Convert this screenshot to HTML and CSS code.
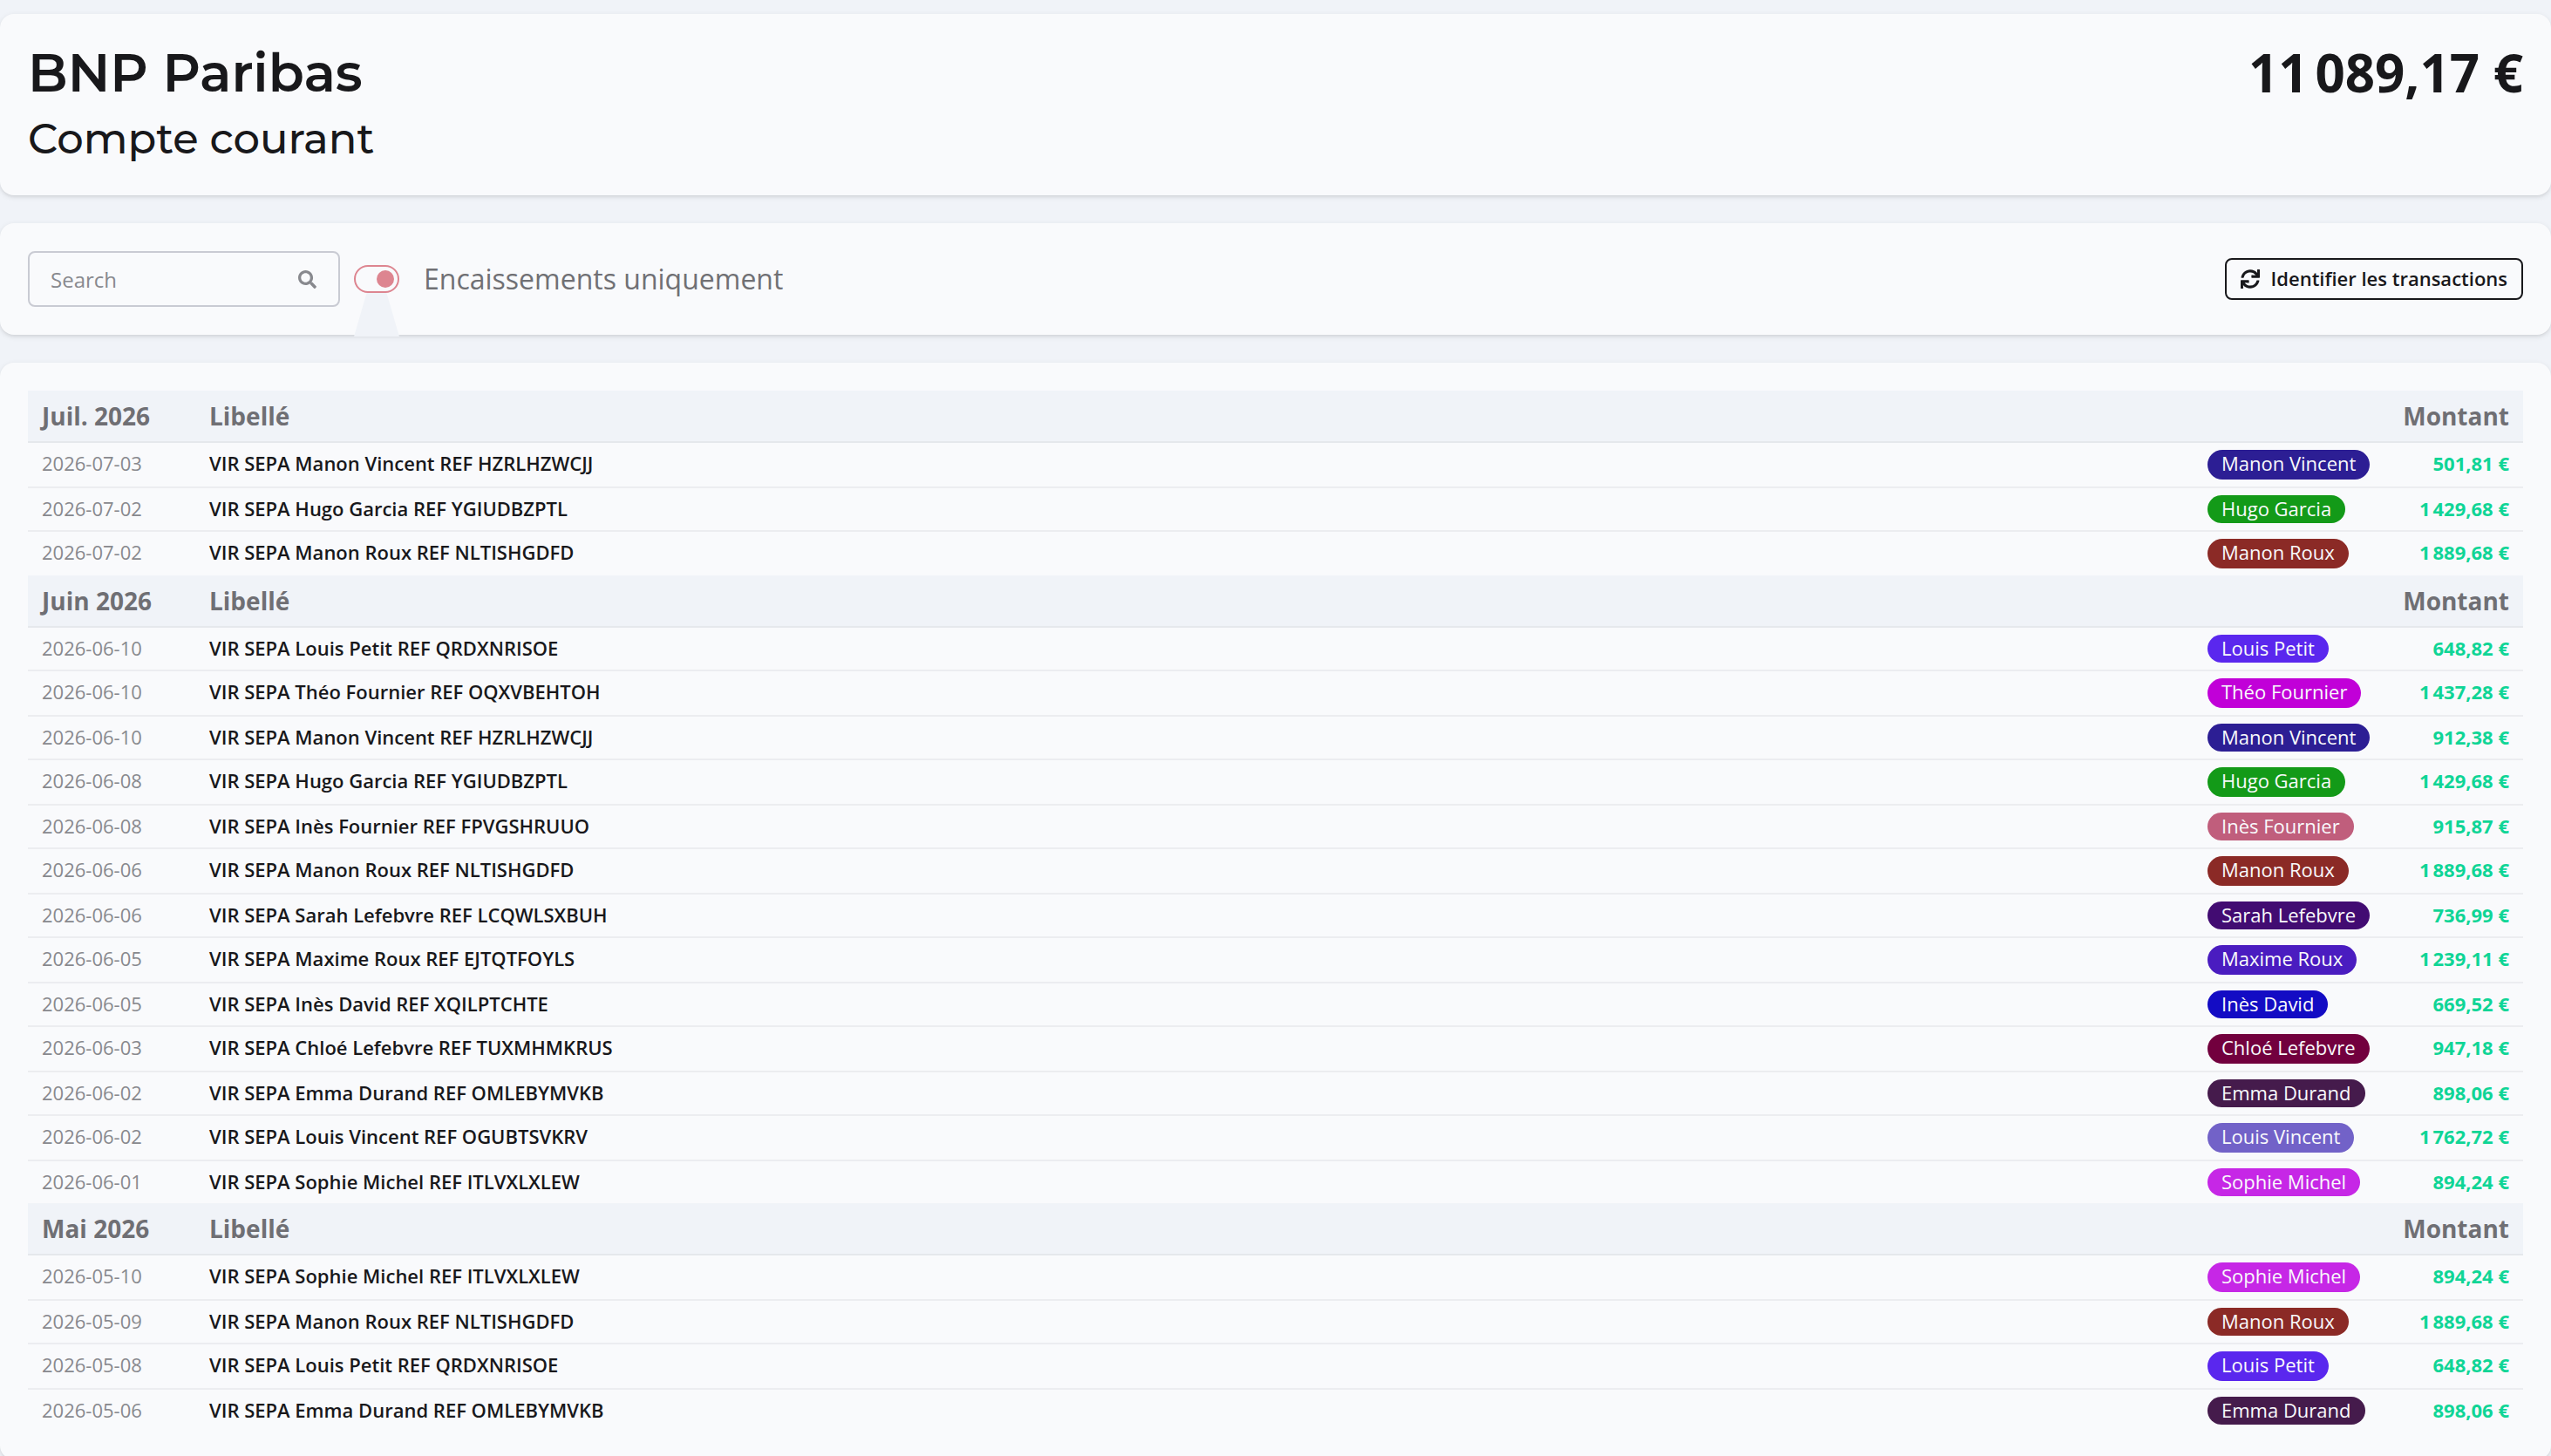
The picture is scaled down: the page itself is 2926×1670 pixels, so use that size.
FILE: index.html
```
<!DOCTYPE html>
<html lang="fr">
<head>
  <meta charset="UTF-8">
  <title>Compte courant</title>
  <link rel="stylesheet" href="styles.css">
</head>
<body>
  <header class="card account">
    <div>
      <h1>BNP Paribas</h1>
      <h2>Compte courant</h2>
    </div>
    <div class="balance">11&#8239;089,17&nbsp;€</div>
  </header>

  <section class="card toolbar">
    <label class="search">
      <input type="text" placeholder="Search">
      <svg viewBox="0 0 512 512" fill="currentColor">
        <path d="M505 442.7L405.3 343c-4.5-4.5-10.6-7-17-7H372c27.6-35.3 44-79.7 44-128C416 93.1 322.9 0 208 0S0 93.1 0 208s93.1 208 208 208c48.3 0 92.7-16.4 128-44v16.3c0 6.4 2.5 12.5 7 17l99.7 99.7c9.4 9.4 24.6 9.4 33.9 0l28.3-28.3c9.4-9.4 9.4-24.6.1-34zM208 336c-70.7 0-128-57.2-128-128 0-70.7 57.2-128 128-128 70.7 0 128 57.2 128 128 0 70.7-57.2 128-128 128z"/>
      </svg>
    </label>
    <span class="toggle"><span class="knob"></span><span class="toggle-tail"></span></span>
    <span class="toggle-label">Encaissements uniquement</span>
    <button class="identify-btn">
      <svg viewBox="0 0 512 512" fill="currentColor">
        <path d="M440.65 12.57l4 82.77A247.16 247.16 0 0 0 255.83 8C134.73 8 33.91 94.92 12.29 209.82A12 12 0 0 0 24.09 224h49.05a12 12 0 0 0 11.67-9.26 175.91 175.91 0 0 1 317-56.94l-101.46-4.86a12 12 0 0 0-12.57 12v47.41a12 12 0 0 0 12 12H500a12 12 0 0 0 12-12V12a12 12 0 0 0-12-12h-47.37a12 12 0 0 0-11.98 12.57zM255.83 432a175.61 175.61 0 0 1-146-77.8l101.8 4.87a12 12 0 0 0 12.57-12v-47.4a12 12 0 0 0-12-12H12a12 12 0 0 0-12 12V500a12 12 0 0 0 12 12h47.35a12 12 0 0 0 12-12.6l-4.15-82.57A247.17 247.17 0 0 0 255.83 504c121.11 0 221.93-86.92 243.55-201.82a12 12 0 0 0-11.8-14.18h-49.05a12 12 0 0 0-11.67 9.26A175.86 175.86 0 0 1 255.83 432z"/>
      </svg>
      <span>Identifier les transactions</span>
    </button>
  </section>

  <main class="card">
    <table id="transactions"></table>
  </main>

  <script>
    const colors = {
      'Manon Vincent': '#2c1e94',
      'Hugo Garcia': '#139a18',
      'Manon Roux': '#8b2a26',
      'Louis Petit': '#5a27ee',
      'Théo Fournier': '#c100d8',
      'Inès Fournier': '#c05e7c',
      'Sarah Lefebvre': '#420c72',
      'Maxime Roux': '#4a1cc0',
      'Inès David': '#130cc4',
      'Chloé Lefebvre': '#72003e',
      'Emma Durand': '#451b4c',
      'Louis Vincent': '#7262c8',
      'Sophie Michel': '#c627e6'
    };

    const months = [
      { title: 'Juil. 2026', rows: [
        ['2026-07-03', 'Manon Vincent', 'HZRLHZWCJJ', 501.81],
        ['2026-07-02', 'Hugo Garcia', 'YGIUDBZPTL', 1429.68],
        ['2026-07-02', 'Manon Roux', 'NLTISHGDFD', 1889.68]
      ]},
      { title: 'Juin 2026', rows: [
        ['2026-06-10', 'Louis Petit', 'QRDXNRISOE', 648.82],
        ['2026-06-10', 'Théo Fournier', 'OQXVBEHTOH', 1437.28],
        ['2026-06-10', 'Manon Vincent', 'HZRLHZWCJJ', 912.38],
        ['2026-06-08', 'Hugo Garcia', 'YGIUDBZPTL', 1429.68],
        ['2026-06-08', 'Inès Fournier', 'FPVGSHRUUO', 915.87],
        ['2026-06-06', 'Manon Roux', 'NLTISHGDFD', 1889.68],
        ['2026-06-06', 'Sarah Lefebvre', 'LCQWLSXBUH', 736.99],
        ['2026-06-05', 'Maxime Roux', 'EJTQTFOYLS', 1239.11],
        ['2026-06-05', 'Inès David', 'XQILPTCHTE', 669.52],
        ['2026-06-03', 'Chloé Lefebvre', 'TUXMHMKRUS', 947.18],
        ['2026-06-02', 'Emma Durand', 'OMLEBYMVKB', 898.06],
        ['2026-06-02', 'Louis Vincent', 'OGUBTSVKRV', 1762.72],
        ['2026-06-01', 'Sophie Michel', 'ITLVXLXLEW', 894.24]
      ]},
      { title: 'Mai 2026', rows: [
        ['2026-05-10', 'Sophie Michel', 'ITLVXLXLEW', 894.24],
        ['2026-05-09', 'Manon Roux', 'NLTISHGDFD', 1889.68],
        ['2026-05-08', 'Louis Petit', 'QRDXNRISOE', 648.82],
        ['2026-05-06', 'Emma Durand', 'OMLEBYMVKB', 898.06]
      ]}
    ];

    function formatAmount(value) {
      const [whole, cents] = value.toFixed(2).split('.');
      return whole.replace(/(\d)(\d{3})$/, '$1\u202f$2') + ',' + cents + '\u00a0€';
    }

    // Badge heights alternate over the whole table, not per month
    let count = 0;
    document.getElementById('transactions').innerHTML = months.map(month => `
      <thead>
        <tr><th class="date">${month.title}</th><th>Libellé</th><th class="tenant"></th><th class="amount">Montant</th></tr>
      </thead>
      <tbody>
        ${month.rows.map(([date, name, ref, amount]) => `
          <tr class="${count++ % 2 ? 'short' : 'tall'}">
            <td class="date">${date}</td>
            <td>VIR SEPA ${name} REF ${ref}</td>
            <td class="tenant"><span class="badge" style="background-color: ${colors[name]}">${name}</span></td>
            <td class="amount">${formatAmount(amount)}</td>
          </tr>`).join('')}
      </tbody>`).join('');
  </script>
</body>
</html>
```
FILE: styles.css
```
* {
  box-sizing: border-box;
}

body {
  margin: 0;
  padding: 16px 0;
  display: flex;
  flex-direction: column;
  gap: 32px;
  height: 1670px;
  overflow: hidden;
  background-color: #f0f3f8;
  color: #18181b;
  font-family: 'Open Sans', sans-serif;
  font-size: 22px;
}

.card {
  flex-shrink: 0;
  padding: 32px;
  background-color: #f9fafc;
  border-radius: 16px;
  box-shadow: 0 2px 6px rgba(0, 0, 0, 0.1), 0 2px 4px -2px rgba(0, 0, 0, 0.1);
}

.account {
  display: flex;
  justify-content: space-between;
  height: 208px;
}

h1, h2 {
  margin: 0;
  font-family: Montserrat, Inter, sans-serif;
}

h1 {
  font-size: 60px;
  font-weight: 600;
  line-height: 72px;
}

h2 {
  font-size: 48px;
  font-weight: 500;
  line-height: 78px;
}

.balance {
  font-size: 60px;
  font-weight: 700;
  line-height: 70px;
}

.toolbar {
  display: flex;
  align-items: center;
  height: 128px;
}

.search {
  display: flex;
  align-items: center;
  width: 358px;
  height: 64px;
  padding: 0 25px 0 24px;
  border: 2px solid #c9cbd3;
  border-radius: 8px;
  color: #88898e;
}

.search input {
  flex: 1;
  min-width: 0;
  padding: 0;
  border: none;
  outline: none;
  background: none;
  font: inherit;
  font-size: 24px;
}

.search input::placeholder {
  color: #88898e;
}

.search svg {
  width: 21px;
  height: 21px;
}

.toggle {
  position: relative;
  display: flex;
  align-items: center;
  justify-content: flex-end;
  width: 52px;
  height: 32px;
  margin-left: 16px;
  padding-right: 4px;
  border: 2px solid #dd8590;
  border-radius: 16px;
}

.knob {
  width: 20px;
  height: 20px;
  border-radius: 50%;
  background-color: #dd8590;
}

.toggle-tail {
  position: absolute;
  top: 30px;
  left: -2px;
  width: 52px;
  height: 50px;
  background-color: #f0f3f8;
  clip-path: polygon(28% 0, 72% 0, 100% 100%, 0 100%);
}

.toggle-label {
  margin-left: 28px;
  padding-bottom: 2px;
  font-size: 32px;
  color: #707074;
}

.identify-btn {
  display: flex;
  align-items: center;
  gap: 12px;
  height: 48px;
  margin-left: auto;
  padding: 0 16px;
  border: 2px solid #18181b;
  border-radius: 8px;
  background: none;
  color: #18181b;
  font: 600 22px 'Open Sans', sans-serif;
}

.identify-btn span {
  padding-bottom: 2px;
}

.identify-btn svg {
  width: 22px;
  height: 22px;
  margin-right: 1px;
}

table {
  width: 100%;
  table-layout: fixed;
  border-collapse: separate;
  border-spacing: 0;
}

th {
  height: 60px;
  padding: 0 16px;
  border-bottom: 2px solid #e5e8ec;
  background-color: #f0f3f8;
  color: #6f6f74;
  font-size: 28px;
  font-weight: 700;
  text-align: left;
}

td {
  height: 52px;
  padding: 8px 16px 0;
  border-bottom: 2px solid #ecedf0;
  font-weight: 600;
  line-height: 31px;
  vertical-align: top;
}

.short td {
  height: 50px;
}

tbody tr:last-child td {
  height: 50px;
  border-bottom: none;
}

tbody tr.short:last-child td {
  height: 48px;
}

.date {
  width: 192px;
}

td.date {
  color: #88898e;
  font-weight: 400;
}

.tenant {
  width: 218px;
}

.amount {
  width: 160px;
  text-align: right;
}

td.amount {
  color: #0fd596;
  font-weight: 700;
}

.badge {
  display: block;
  width: fit-content;
  height: 34px;
  padding: 0 16px;
  border-radius: 17px;
  color: #f9fafc;
  font-weight: 400;
  white-space: nowrap;
}

.short .badge {
  height: 32px;
}
```
